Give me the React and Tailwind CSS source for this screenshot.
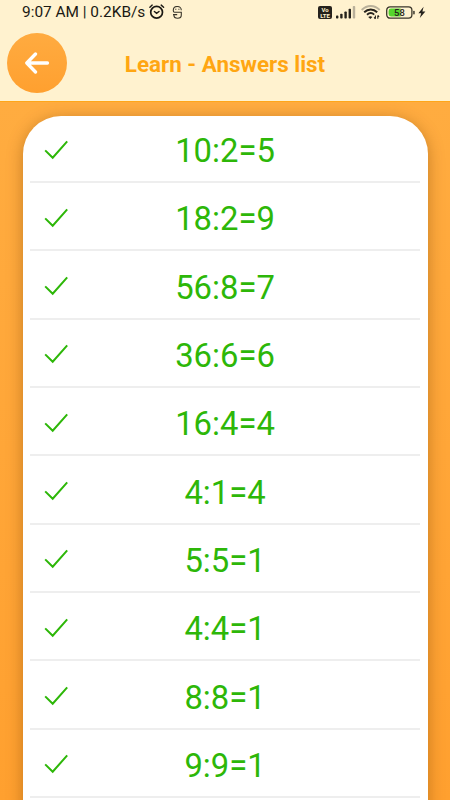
const answers = ['10:2=5', '18:2=9', '56:8=7', '36:6=6', '16:4=4', '4:1=4', '5:5=1', '4:4=1', '8:8=1', '9:9=1'];

function AlarmIcon() {
  return (
    <svg className="h-[17px] w-[17px] shrink-0" viewBox="0 0 17 17" fill="none" stroke="#1b1913" strokeWidth="1.7" strokeLinecap="round">
      <circle cx="7.6" cy="8.2" r="5.9" />
      <path d="M.9 3.2 3.2 1.1M14.6 3.2 12.2 1.1M5.4 7.5l2.2 1.9 2.4-1.9" strokeWidth="1.4" />
    </svg>
  );
}

function FaceIcon() {
  return (
    <svg className="ml-[6px] h-[14px] w-[11px] shrink-0" viewBox="0 0 11 14" fill="none" stroke="#39352a" strokeWidth="1.1">
      <path d="M9.3 4.2C9.3-.7 1.3-.7 1.3 4.2v.6Q1.3 6.2 2.7 6.2H9.3v2.8c0 4.4-7.4 4.4-7.4 0V8.6M1 8.6h4.2" />
      <path d="M3.8 2.8v1M6.9 2.8v1" />
    </svg>
  );
}

function StatusBar() {
  return (
    <div className="flex h-[25px] items-center pl-[22px] text-[#1b1913]">
      <span className="w-[127px] shrink-0 whitespace-nowrap text-[15.4px] leading-[25px]">9:07 AM | 0.2KB/s</span>
      <AlarmIcon />
      <FaceIcon />
      <div className="ml-auto flex items-center pr-[24px]">
        <div className="flex h-[13px] w-[14px] flex-col items-center justify-center rounded-[2px] bg-[#25221c] text-[6px] font-bold leading-[6px] text-[#fff2cf]">
          <span className="block h-[6px]">Vo</span>
          <span className="block h-[6px]">LTE</span>
        </div>
        <svg className="ml-[4px] h-[14px] w-[20px]" viewBox="0 0 20 14" fill="#25221c">
          <rect x="0" y="9.6" width="2.4" height="3" rx=".8" />
          <rect x="4.2" y="7.8" width="2.4" height="4.8" rx=".8" />
          <rect x="8.4" y="5.4" width="2.4" height="7.2" rx=".8" />
          <rect x="12.6" y="2.8" width="2.4" height="9.8" rx=".8" />
          <rect x="16.8" y="0" width="2.4" height="12.6" rx=".8" fill="#b9b09a" />
        </svg>
        <svg className="ml-[5px] h-[15px] w-[20px]" viewBox="0 0 20 15" fill="none" stroke="#25221c" strokeWidth="1.9">
          <path d="M.7 5C6-.4 13.4-.4 18.7 5" stroke="#b9b09a" />
          <path d="M3.2 7.2c3.8-3.7 9.2-3.7 13 0M6 9.8c2.2-2 5.2-2 7.2-.2" />
          <path d="M7.2 12 9.4 14l2-2q-2-1.4-4.2 0Z" fill="#25221c" stroke="none" />
          <path d="M14.4 10.4v3.4m0 0-1.3-1.4M16.8 13.8v-3.4m0 0 1.3 1.4" strokeWidth="1.1" />
        </svg>
        <svg className="ml-[5px] h-[14px] w-[30px]" viewBox="0 0 30 14">
          <rect x=".7" y=".8" width="25.2" height="11.4" rx="3.4" fill="#fff2cf" stroke="#39352a" strokeWidth="1.3" />
          <path d="M5 2.5h9.6v8H5a2.4 2.4 0 0 1-2.4-2.4V4.9A2.4 2.4 0 0 1 5 2.5Z" fill="#55d62c" />
          <text x="13.4" y="9.9" textAnchor="middle" fontSize="9.4" fontWeight="500" fill="#25221c">58</text>
          <rect x="27.2" y="4.7" width="1.5" height="3.8" rx=".7" fill="#39352a" />
        </svg>
        <svg className="ml-[2px] h-[14px] w-[8px]" viewBox="0 0 8 14" fill="#25221c">
          <path d="M5.6.7.4 7.2h2.8L1.8 12.1l5.6-6.7H4.4Z" />
        </svg>
      </div>
    </div>
  );
}

function AnswerRow({ text }) {
  return (
    <li className="grid h-[68.36px] shrink-0 grid-cols-[52px_1fr_52px] items-center border-b-2 border-[#eeeeee] first:h-[67.4px]">
      <svg className="ml-[14px] mt-[3px] h-[20px] w-[26px]" viewBox="0 0 26 20" fill="none" stroke="#2db708" strokeWidth="2">
        <path d="M1.2 10.4 8.7 17.7 23.2 1.4" />
      </svg>
      <span className="pt-[6.5px] text-center text-[32.8px] leading-[40px] text-[#2db708]">{text}</span>
    </li>
  );
}

export default function App() {
  return (
    <div className="flex h-[800px] w-[450px] flex-col overflow-hidden bg-[#ffa737] font-[Roboto,sans-serif]">
      <header className="h-[102px] shrink-0 border-b border-[#ffa61a] bg-[#fff2cf]">
        <StatusBar />
        <div className="grid h-[76.6px] grid-cols-[60px_1fr_60px] items-center px-[7.3px]">
          <button aria-label="Back" className="flex size-[60px] items-center justify-center rounded-full bg-linear-to-b from-[#ffab40] to-[#ffa02f]">
            <svg className="h-[22px] w-[26px]" viewBox="0 0 26 22" fill="none" stroke="white" strokeWidth="3.3" strokeLinecap="round" strokeLinejoin="round">
              <path d="M11.5 2 2.8 11l8.7 9M3 11h20.5" />
            </svg>
          </button>
          <h1 className="whitespace-nowrap pt-[4px] text-center text-[22.4px] font-bold text-[#ffa612]">Learn - Answers list</h1>
        </div>
      </header>
      <main className="flex min-h-0 flex-1 flex-col overflow-hidden bg-linear-to-b from-[#ffac40] to-[#ffa02f] px-[22.5px] pt-[13.5px]">
        <ul className="flex h-[760px] shrink-0 flex-col rounded-t-[38px] bg-white px-[7.5px] shadow-[0_3px_16px_rgba(110,60,0,0.4)]">
          {answers.map((answer) => (
            <AnswerRow key={answer} text={answer} />
          ))}
        </ul>
      </main>
    </div>
  );
}
